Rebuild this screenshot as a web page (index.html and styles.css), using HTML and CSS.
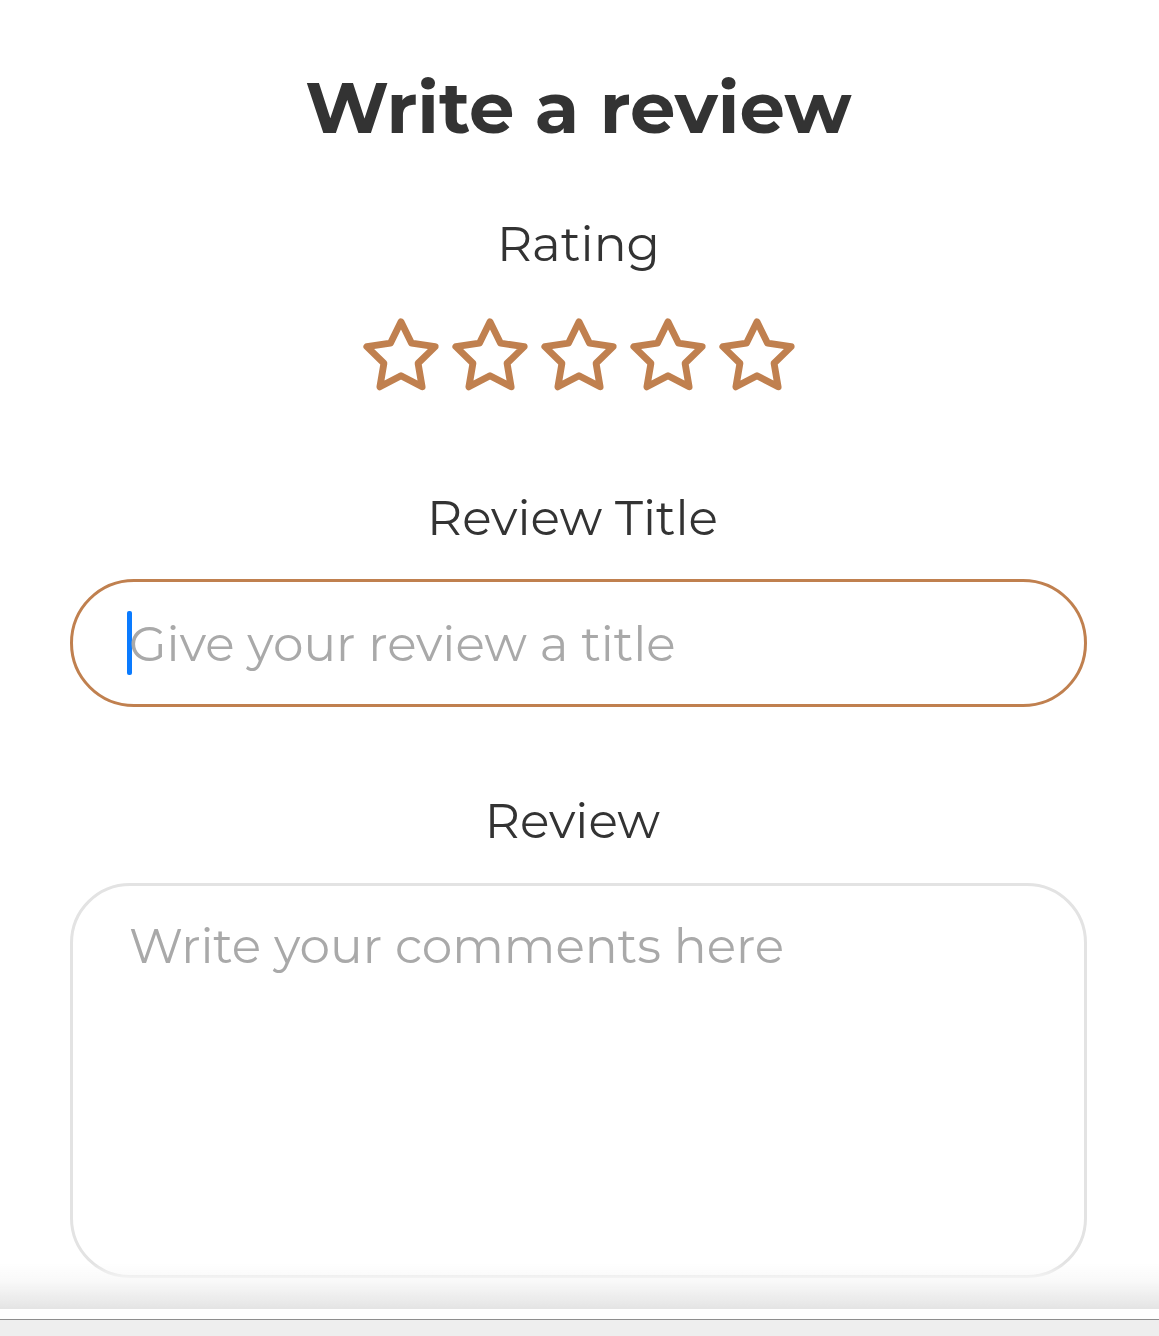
FILE: index.html
```html
<!DOCTYPE html>
<html lang="en">
<head>
<meta charset="utf-8">
<title>Write a review</title>
<link rel="stylesheet" href="styles.css">
</head>
<body>
<main class="review-form">
  <h1 class="title">Write a review</h1>
  <div class="field">
    <div class="label label-rating">Rating</div>
    <div class="stars">
      <svg class="star" viewBox="0 0 24 24"><path d="M12 2l3.09 6.26L22 9.27l-5 4.87 1.18 6.88L12 17.77l-6.18 3.25L7 14.14 2 9.27l6.91-1.01L12 2z"/></svg>
      <svg class="star" viewBox="0 0 24 24"><path d="M12 2l3.09 6.26L22 9.27l-5 4.87 1.18 6.88L12 17.77l-6.18 3.25L7 14.14 2 9.27l6.91-1.01L12 2z"/></svg>
      <svg class="star" viewBox="0 0 24 24"><path d="M12 2l3.09 6.26L22 9.27l-5 4.87 1.18 6.88L12 17.77l-6.18 3.25L7 14.14 2 9.27l6.91-1.01L12 2z"/></svg>
      <svg class="star" viewBox="0 0 24 24"><path d="M12 2l3.09 6.26L22 9.27l-5 4.87 1.18 6.88L12 17.77l-6.18 3.25L7 14.14 2 9.27l6.91-1.01L12 2z"/></svg>
      <svg class="star" viewBox="0 0 24 24"><path d="M12 2l3.09 6.26L22 9.27l-5 4.87 1.18 6.88L12 17.77l-6.18 3.25L7 14.14 2 9.27l6.91-1.01L12 2z"/></svg>
    </div>
  </div>
  <div class="field field-title">
    <div class="label">Review Title</div>
    <div class="input focused"><span class="caret"></span><span class="placeholder">Give your review a title</span></div>
  </div>
  <div class="field field-review">
    <div class="label">Review</div>
    <div class="textarea"><span class="placeholder">Write your comments here</span></div>
  </div>
</main>
<div class="bottom-bar"><div class="fade"></div><div class="gap"></div><div class="toolbar"></div></div>
</body>
</html>
```

FILE: styles.css
```css
html, body {
  margin: 0;
  padding: 0;
  background: #ffffff;
}
body {
  font-family: Montserrat, "DejaVu Sans", "Noto Sans", sans-serif;
  color: #333333;
  height: 1336px;
  overflow: hidden;
}
.review-form {
  display: flex;
  flex-direction: column;
  padding: 0 72px 0 70px;
}
.title {
  margin: 65px 0 0;
  text-align: center;
  font-size: 72px;
  line-height: 84px;
  font-weight: 700;
  color: #333333;
}
.field {
  display: flex;
  flex-direction: column;
  align-items: center;
}
.label {
  font-size: 48.7px;
  line-height: 60px;
  color: #333333;
  padding-right: 12px;
}
.label-rating {
  margin-top: 65px;
  padding-right: 0;
}
.stars {
  display: flex;
  gap: 7px;
  margin-top: 41px;
}
.star {
  width: 82px;
  height: 82px;
  display: block;
  fill: none;
  stroke: #c0804f;
  stroke-width: 2;
  stroke-linejoin: round;
}
.field-title {
  margin-top: 91px;
}
.input {
  align-self: stretch;
  box-sizing: border-box;
  height: 128px;
  border: 3px solid #c0804f;
  border-radius: 64px;
  display: flex;
  align-items: center;
  padding-left: 54px;
  margin-top: 31px;
}
.caret {
  display: block;
  width: 5px;
  height: 64px;
  background: #0a7bff;
  border-radius: 2px;
  margin-right: -3px;
}
.placeholder {
  font-size: 48.6px;
  color: #a9a9a9;
}
.field-review {
  margin-top: 84px;
}
.textarea {
  align-self: stretch;
  box-sizing: border-box;
  height: 395px;
  border: 3px solid #e3e3e3;
  border-radius: 60px;
  margin-top: 32px;
  padding: 30px 0 0 56px;
}
.bottom-bar {
  position: fixed;
  left: 0;
  right: 0;
  bottom: 0;
  display: flex;
  flex-direction: column;
  pointer-events: none;
}
.fade {
  height: 46px;
  background: linear-gradient(to bottom, rgba(240,240,240,0) 0%, rgba(248,248,248,0.9) 40%, #e4e4e4 100%);
}
.gap {
  height: 10px;
  background: #ffffff;
}
.toolbar {
  height: 16px;
  border-top: 1px solid #8e8e8e;
  background: #eeeeee;
}
```
